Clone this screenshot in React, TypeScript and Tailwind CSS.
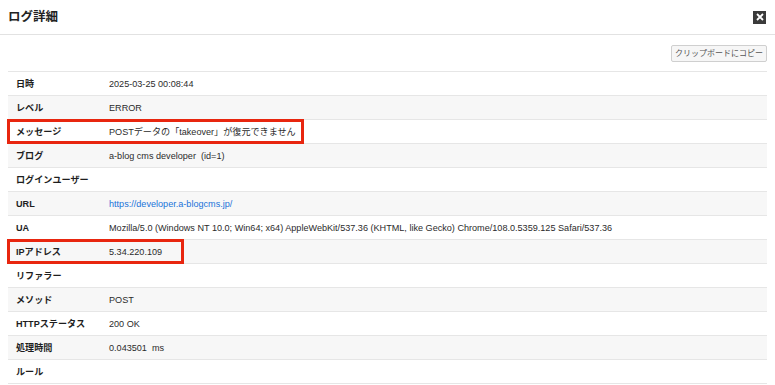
import React from 'react'

type Row = { label: string; value?: React.ReactNode; mark?: number }

const rows: Row[] = [
  { label: '日時', value: '2025-03-25 00:08:44' },
  { label: 'レベル', value: 'ERROR' },
  { label: 'メッセージ', value: 'POSTデータの「takeover」が復元できません', mark: 297 },
  { label: 'ブログ', value: 'a-blog cms developer\u00a0\u00a0(id=1)' },
  { label: 'ログインユーザー' },
  {
    label: 'URL',
    value: <a className="text-[#1a73d9]">https://developer.a-blogcms.jp/</a>,
  },
  {
    label: 'UA',
    value:
      'Mozilla/5.0 (Windows NT 10.0; Win64; x64) AppleWebKit/537.36 (KHTML, like Gecko) Chrome/108.0.5359.125 Safari/537.36',
  },
  { label: 'IPアドレス', value: '5.34.220.109', mark: 177 },
  { label: 'リファラー' },
  { label: 'メソッド', value: 'POST' },
  { label: 'HTTPステータス', value: '200 OK' },
  { label: '処理時間', value: '0.043501\u00a0\u00a0ms' },
  { label: 'ルール' },
]

export default function App() {
  return (
    <div
      className="w-[775px] h-[385px] overflow-hidden bg-white text-[#2b2b2b]"
      style={{ fontFamily: '"Liberation Sans", "Noto Sans CJK JP", sans-serif' }}
    >
      {/* header */}
      <div className="h-[35px] border-b border-[#e2e2e2] flex items-center justify-between pl-[8px] pr-[9px]">
        <h1 className="text-[12.5px] font-bold text-[#222] pt-[1px]">ログ詳細</h1>
        <button className="w-[13px] h-[13px] bg-[#3a3a3a] flex items-center justify-center">
          <svg width="8" height="8" viewBox="0 0 8 8">
            <path d="M1 1L7 7M7 1L1 7" stroke="#fff" strokeWidth="1.8" />
          </svg>
        </button>
      </div>

      <div className="px-[8px] pt-[10px]">
        <div className="flex justify-end">
          <button className="h-[17px] w-[96px] border border-[#cfcfcf] rounded-[2px] bg-[#f6f6f6] text-[8px] text-[#555] leading-none">
            クリップボードにコピー
          </button>
        </div>

        <div className="mt-[9px] border-t border-[#e6e6e6]">
          {rows.map((r, i) => (
            <div
              key={r.label}
              className={`relative h-[24px] flex items-center pt-[2px] border-b border-[#e6e6e6] text-[9.1px] ${
                i % 2 === 1 ? 'bg-[#f7f7f7]' : 'bg-white'
              }`}
            >
              <div className="w-[101px] pl-[8px] font-bold text-[#1e1e1e] shrink-0">{r.label}</div>
              <div className="whitespace-nowrap">{r.value}</div>
              {r.mark && (
                <div
                  className="absolute left-[-1px] top-[-1px] h-[25px] border-[3px] border-[#e8260f]"
                  style={{ width: r.mark }}
                />
              )}
            </div>
          ))}
        </div>
      </div>
    </div>
  )
}
